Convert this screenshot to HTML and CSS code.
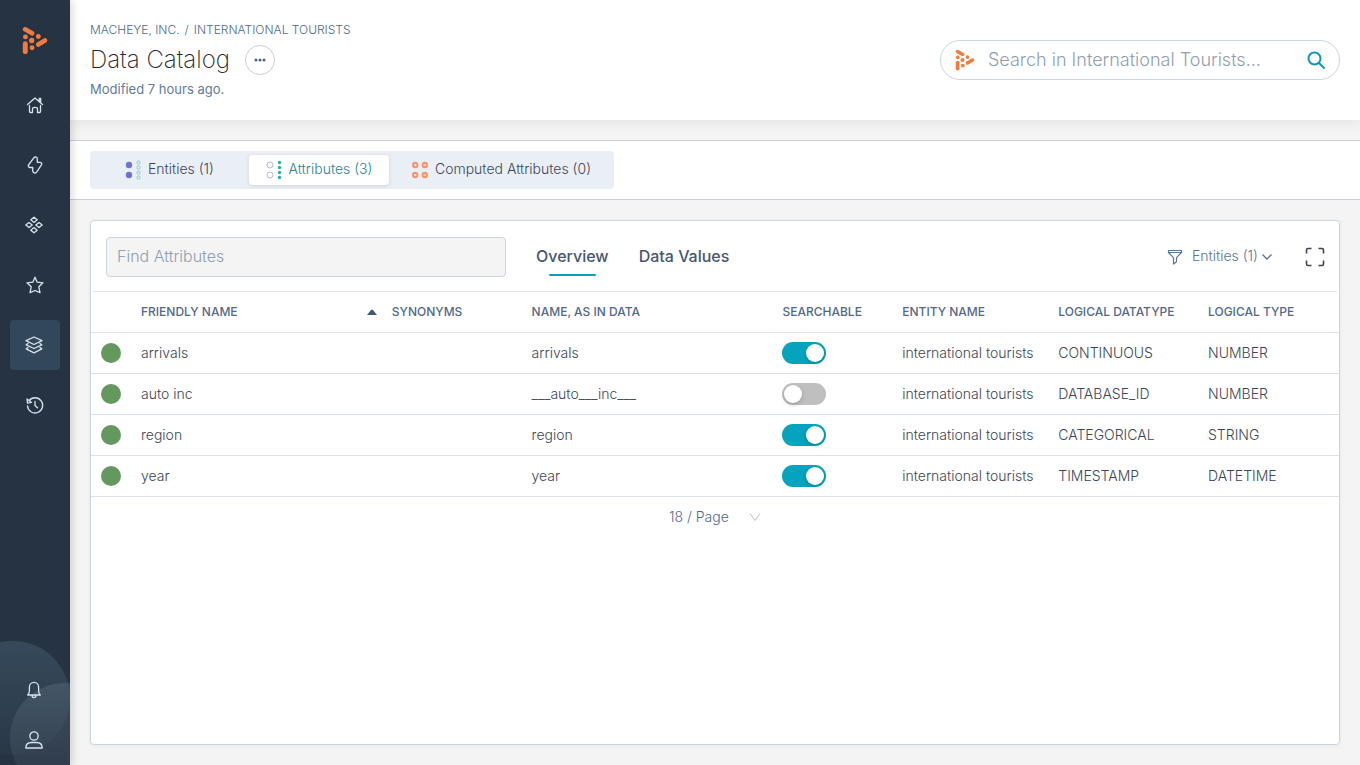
FILE: index.html
```html
<!DOCTYPE html>
<html lang="en">
<head>
<meta charset="utf-8">
<meta name="viewport" content="width=device-width, initial-scale=1">
<title>Data Catalog</title>
<link rel="stylesheet" href="styles.css">
</head>
<body>
<svg class="defs" aria-hidden="true">
  <symbol id="logo" viewBox="66 76 78 88">
    <g fill="none" stroke="currentColor" stroke-linecap="round">
      <path stroke-width="14" d="M75 86 96 98M115 132 135 120"/>
      <path stroke-width="15" d="M75.500 130V154"/>
    </g>
    <g fill="currentColor"><circle cx="76" cy="109" r="7.500"/><circle cx="95" cy="120" r="8"/><circle cx="115" cy="108" r="7.500"/><circle cx="96" cy="142" r="7.500"/></g>
  </symbol>
</svg>
<div class="app">
  <aside class="sidebar">
    <svg class="sidebar-art" viewBox="0 0 70 125" aria-hidden="true">
      <defs>
        <linearGradient id="fade" x1="0" y1="0" x2="0" y2="1"><stop offset="0" stop-color="#3c5365" stop-opacity=".7"/><stop offset="1" stop-color="#3c5365" stop-opacity=".15"/></linearGradient>
        <linearGradient id="fade2" x1="0" y1="0" x2="0" y2="1"><stop offset="0" stop-color="#5a6a7a" stop-opacity=".45"/><stop offset="1" stop-color="#5a6a7a" stop-opacity=".1"/></linearGradient>
      </defs>
      <circle cx="13" cy="58" r="57" fill="url(#fade)"/><circle cx="65" cy="98" r="55" fill="url(#fade2)"/>
    </svg>
    <a class="brand" href="#" aria-label="Home page"><svg width="26" height="29"><use href="#logo"/></svg></a>
    <nav class="nav" aria-label="Main">
      <a class="nav-item" href="#" aria-label="Home"><svg class="icon" viewBox="0 0 18 18"><path d="M1.500 8.500 9 2l7.500 6.500M13.300 5V2.500h1.400V7M3.500 9.500v6q0 1 1 1h2v-3.500q0-1.700 2.500-1.700t2.500 1.700v3.500h2q1 0 1-1v-6"/></svg></a>
      <a class="nav-item" href="#" aria-label="Insights"><svg class="icon" viewBox="0 0 18 18"><path d="M10.300 1.200Q11.300 1.500 11.300 2.600v3.700h2.900q2 .5 1.400 2.300l-4.800 7.200Q9.300 18 7.300 16.300q-.6-.7-.6-1.600V11.500H4Q1.700 11 2.500 9l5.100-6.900q1.100-1.500 2.700-.9Z"/></svg></a>
      <a class="nav-item" href="#" aria-label="Collections"><svg class="icon" viewBox="0 0 18 18"><path d="m8 1.200 3.200 2.600L8 6.400 4.800 3.800ZM3 6.400 6.200 9 3 11.600-.2 9ZM13 6.400 16.200 9 13 11.600 9.800 9ZM8 11.600l3.200 2.600L8 16.800l-3.200-2.600Z"/></svg></a>
      <a class="nav-item" href="#" aria-label="Favorites"><svg class="icon" viewBox="0 0 18 18"><path d="M9 1.200 11.200 6.200 17 6.800 12.800 10.800 14 16.700 9 14.500 4 16.700 5.200 10.800 1 6.800 6.800 6.200Z"/></svg></a>
      <a class="nav-item active" href="#" aria-label="Data catalog" aria-current="page"><svg class="icon" viewBox="0 0 18 18"><path d="m8 1 8 3.700-8 3.800-8-3.800ZM2 7.500.2 8.800 8 12.500l7.800-3.700L14 7.500M2 11.600.2 12.900 8 16.800l7.800-3.900-1.800-1.300"/></svg></a>
      <a class="nav-item" href="#" aria-label="History"><svg class="icon" viewBox="0 0 18 18"><path d="M3 4.800A7.600 7.600 0 1 1 1.500 9.800M1 3l.5 4.200 4-.8ZM9 5.500v4l2.500 2.300"/></svg></a>
    </nav>
    <nav class="nav-bottom" aria-label="Account">
      <a class="nav-item" href="#" aria-label="Notifications"><svg class="icon" viewBox="0 0 18 18"><path d="M1.700 14q1.700-1.500 1.700-4.500V6a4.600 4.600 0 0 1 9.200 0v3.500q0 3 1.700 4.500ZM6 14.300q0 2.400 2 2.400t2-2.400"/></svg></a>
      <a class="nav-item" href="#" aria-label="Profile"><svg class="icon" viewBox="0 0 18 18"><circle cx="8" cy="5" r="4.200"/><path d="M-.2 17q0-5.500 5.700-5.500h5q5.700 0 5.700 5.500Z"/></svg></a>
    </nav>
  </aside>
  <div class="content">
    <header class="header">
      <div>
        <nav class="crumbs" aria-label="Breadcrumb"><a href="#">MACHEYE, INC.</a><span>/</span><a href="#">INTERNATIONAL TOURISTS</a></nav>
        <div class="title-row">
          <h1>Data Catalog</h1>
          <button class="more" type="button" aria-label="More options"><svg width="12" height="4" viewBox="0 0 12 4" fill="currentColor"><circle cx="2" cy="2" r="1.500"/><circle cx="6" cy="2" r="1.500"/><circle cx="10" cy="2" r="1.500"/></svg></button>
        </div>
        <p class="modified">Modified 7 hours ago.</p>
      </div>
      <form class="search" role="search">
        <svg class="search-logo" width="20" height="22"><use href="#logo"/></svg>
        <input type="search" aria-label="Search in International Tourists" placeholder="Search in International Tourists...">
        <button type="button" aria-label="Search"><svg width="18" height="18" viewBox="0 0 18 18" fill="none" stroke="currentColor" stroke-width="2" stroke-linecap="round"><circle cx="7.500" cy="7.500" r="6"/><path d="m12 12 5 5"/></svg></button>
      </form>
    </header>
    <div class="tab-bar">
      <div class="tabs" role="tablist">
        <button class="tab" type="button" role="tab"><svg width="16" height="20" viewBox="0 0 16 20"><g fill="#6c74d0"><circle cx="4" cy="5" r="3.200"/><circle cx="4" cy="15" r="3.200"/></g><g fill="none" stroke="#7fd0c5"><circle cx="13.500" cy="2.500" r="1.600"/><circle cx="13.500" cy="7.500" r="1.600"/><circle cx="13.500" cy="12.500" r="1.600"/><circle cx="13.500" cy="17.500" r="1.600"/></g></svg><span>Entities (1)</span></button>
        <button class="tab selected" type="button" role="tab" aria-selected="true"><svg width="16" height="20" viewBox="0 0 16 20"><g fill="none" stroke="#b5b9e6"><circle cx="4" cy="5" r="3"/><circle cx="4" cy="15" r="3"/></g><g fill="#26b39c"><circle cx="13.500" cy="2.500" r="1.700"/><circle cx="13.500" cy="7.500" r="1.700"/><circle cx="13.500" cy="12.500" r="1.700"/><circle cx="13.500" cy="17.500" r="1.700"/></g></svg><span>Attributes (3)</span></button>
        <button class="tab" type="button" role="tab"><svg width="16" height="20" viewBox="0 0 16 20"><g fill="#f7936a"><circle cx="3.200" cy="5" r="3.200"/><circle cx="12.800" cy="5" r="3.200"/><circle cx="3.200" cy="15" r="3.200"/><circle cx="12.800" cy="15" r="3.200"/></g><path stroke="#fff" d="M2 5h2.400M3.200 3.800v2.400M11.500 5h2.600M2.200 14l2 2M4.200 14l-2 2M11.500 15h2.600"/></svg><span>Computed Attributes (0)</span></button>
      </div>
    </div>
    <main class="panel">
      <div class="toolbar">
        <input class="find" type="text" aria-label="Find attributes" placeholder="Find Attributes">
        <div class="views" role="tablist">
          <button class="view current" type="button" role="tab" aria-selected="true">Overview</button>
          <button class="view" type="button" role="tab">Data Values</button>
        </div>
        <button class="filter" type="button"><svg width="16" height="16" viewBox="0 0 16 16" fill="none" stroke="currentColor" stroke-width="1.200" stroke-linejoin="round"><path d="M1.500 1.500h13v2l-5 5.200v4L6.500 15V8.700l-5-5.200ZM1.500 3.500h13"/></svg><span>Entities (1)</span><svg width="10" height="8" viewBox="0 0 10 8" fill="none" stroke="currentColor" stroke-width="1.400"><path d="m.5 1.500 4.500 4.500 4.500-4.500"/></svg></button>
        <button class="expand" type="button" aria-label="Full screen"><svg width="20" height="20" viewBox="0 0 20 20" fill="none" stroke="currentColor" stroke-width="1.600"><path d="M1.500 6.500V3q0-1.500 1.500-1.500h3.500M13.500 1.500H17q1.500 0 1.500 1.500v3.500M18.500 13.500V17q0 1.500-1.500 1.500h-3.500M6.500 18.500H3q-1.500 0-1.500-1.500v-3.500"/></svg></button>
      </div>
      <table class="grid">
        <colgroup><col class="c-dot"><col class="c-name"><col class="c-syn"><col class="c-name"><col class="c-search"><col class="c-entity"><col class="c-data"><col class="c-type"></colgroup>
        <thead><tr><th aria-label="Status"></th><th aria-sort="ascending"><span class="sorted">FRIENDLY NAME<svg width="10" height="6" viewBox="0 0 10 6" fill="currentColor"><path d="M0 6 4 1q1-1 2 0l4 5Z"/></svg></span></th><th>SYNONYMS</th><th>NAME, AS IN DATA</th><th>SEARCHABLE</th><th>ENTITY NAME</th><th>LOGICAL DATATYPE</th><th>LOGICAL TYPE</th></tr></thead>
        <tbody>
          <tr><td><span class="dot"></span></td><td>arrivals</td><td></td><td>arrivals</td><td><input class="switch" type="checkbox" role="switch" aria-label="arrivals searchable" checked></td><td>international tourists</td><td>CONTINUOUS</td><td>NUMBER</td></tr>
          <tr><td><span class="dot"></span></td><td>auto inc</td><td></td><td>___auto___inc___</td><td><input class="switch" type="checkbox" role="switch" aria-label="auto inc searchable"></td><td>international tourists</td><td>DATABASE_ID</td><td>NUMBER</td></tr>
          <tr><td><span class="dot"></span></td><td>region</td><td></td><td>region</td><td><input class="switch" type="checkbox" role="switch" aria-label="region searchable" checked></td><td>international tourists</td><td>CATEGORICAL</td><td>STRING</td></tr>
          <tr><td><span class="dot"></span></td><td>year</td><td></td><td>year</td><td><input class="switch" type="checkbox" role="switch" aria-label="year searchable" checked></td><td>international tourists</td><td>TIMESTAMP</td><td>DATETIME</td></tr>
        </tbody>
      </table>
      <div class="pager">
        <select aria-label="Rows per page"><option>18 / Page</option></select>
        <svg width="12" height="10" viewBox="0 0 12 10" fill="none" stroke="#bcc3cb"><path d="m1 1.500 5 7 5-7"/></svg>
      </div>
    </main>
  </div>
</div>
</body>
</html>
```
FILE: styles.css
```css
* { box-sizing: border-box; }
body { margin: 0; font-family: Inter, "Noto Sans", sans-serif; font-size: 14px; font-weight: 300; line-height: 20px; color: #3c4658; background: #f4f4f4; }
a { color: inherit; text-decoration: none; }
button, input, select { font: inherit; color: inherit; margin: 0; }
button { padding: 0; border: 0; background: none; cursor: pointer; }
svg { display: block; flex: none; overflow: visible; }
.defs { position: absolute; width: 0; height: 0; }
.app { display: flex; min-height: 100vh; }

.sidebar { position: relative; z-index: 1; flex: none; width: 70px; display: flex; flex-direction: column; align-items: center; background: #263342; box-shadow: 2px 0 8px rgba(0, 0, 0, .16); }
.sidebar-art { position: absolute; left: 0; bottom: 0; width: 70px; overflow: hidden; }
.brand { display: flex; align-items: center; height: 80px; color: #f47b3c; }
.nav { display: grid; gap: 10px; }
.nav-bottom { position: relative; display: grid; margin-top: auto; }
.nav-item { display: grid; place-items: center; width: 50px; height: 50px; border-radius: 4px; color: #d8e3ee; }
.nav-item.active { background: #33475b; }
.icon { width: 18px; height: 18px; fill: none; stroke: currentColor; stroke-width: 1.3; stroke-linejoin: round; stroke-linecap: round; }

.content { flex: 1; min-width: 0; display: flex; flex-direction: column; }
.header { display: flex; align-items: center; justify-content: space-between; height: 120px; padding: 0 20px; background: #fff; box-shadow: 0 2px 14px rgba(0, 0, 0, .08); }
.crumbs { display: flex; gap: 5px; font-size: 12px; font-weight: 300; color: #4d6a8c; }
.title-row { display: flex; align-items: center; gap: 15px; height: 40px; }
h1 { margin: 0; font-size: 24px; font-weight: 200; line-height: 32px; color: #23272d; }
.more { display: grid; place-items: center; width: 30px; height: 30px; border: 1px solid #c5ced8; border-radius: 50%; color: #48658a; }
.modified { margin: 0; font-size: 13px; line-height: 18px; padding-bottom: 2px; font-weight: 400; color: #627c9b; }
.search { display: flex; align-items: center; width: 400px; height: 40px; padding: 0 14px; border: 1px solid #cbd5df; border-radius: 20px; }
.search-logo { color: #f47b3c; }
.search input { flex: 1; min-width: 0; height: 32px; margin-left: 13px; padding: 0 0 2px; border: 0; outline: 0; background: none; font-size: 18px; }
.search button { color: #0d98b4; }
::placeholder { color: #8f9fb1; opacity: 1; }

.tab-bar { margin-top: 20px; padding: 10px 20px; border: solid #cbd1d9; border-width: 1px 0; background: #fff; }
.tabs { display: inline-grid; grid-template-columns: 151px 140px 217px; gap: 4px; padding: 4px; border-radius: 4px; background: #eaeff6; vertical-align: top; }
.tab { display: flex; align-items: center; justify-content: center; gap: 7px; height: 30px; border-radius: 4px; white-space: nowrap; }
.tab span { padding-bottom: 2px; }
.tab.selected { background: #fff; color: #2a839b; box-shadow: 0 1px 4px rgba(0, 0, 0, .12); }

.panel { flex: 1; margin: 20px; border: 1px solid #cbd5e0; border-radius: 4px; background: #fff; box-shadow: 0 1px 4px rgba(0, 0, 0, .06); }
.toolbar { display: flex; align-items: center; margin: 0 2px; padding: 16px 12px 14px 13px; border-bottom: 1px solid #dfe3e8; }
.find { width: 400px; height: 40px; padding: 0 10px 2px; border: 1px solid #cbd5e0; border-radius: 4px; outline: 0; background: #f4f4f4; font-size: 16px; }
.views { display: flex; gap: 30px; margin-left: 30px; }
.view { display: grid; align-content: space-between; justify-items: center; height: 38px; padding-top: 8px; font-size: 16px; font-weight: 500; color: #46586f; }
.view.current::after { content: ""; width: 47px; height: 2px; border-radius: 1px; background: #0d9db6; }
.filter { display: flex; align-items: center; gap: 9px; margin-left: auto; color: #5b7594; }
.filter span { margin-right: -5px; padding-bottom: 2px; }
.expand { margin-left: 33px; color: #3f4650; }

.grid { width: 100%; table-layout: fixed; border-collapse: separate; border-spacing: 0; }
.grid th, .grid td { height: 41px; padding: 0 10px; border-bottom: 1px solid #dbe1e8; text-align: left; white-space: nowrap; }
.grid td { padding-bottom: 1px; }
.grid th { font-size: 12px; font-weight: 500; color: #52698a; }
.c-dot { width: 40px; }
.c-name { width: 20.1%; }
.c-syn { width: 11.2%; }
.c-search { width: 9.6%; }
.c-entity { width: 12.5%; }
.c-data { width: 12%; }
.sorted { display: flex; align-items: center; justify-content: space-between; }
.sorted svg { margin-right: -5px; color: #40597b; }
.dot { display: block; width: 20px; height: 20px; border-radius: 50%; background: #64985f; }
.switch { appearance: none; display: block; width: 44px; height: 22px; padding: 2px; border-radius: 11px; background: #bfbfbf; }
.switch::before { content: ""; display: block; width: 18px; height: 18px; border-radius: 50%; background: #fff; box-shadow: 0 2px 4px rgba(0, 35, 11, .2); }
.switch:checked { background: #05a3bd; }
.switch:checked::before { margin-left: auto; }
.pager { display: flex; align-items: center; justify-content: center; gap: 20px; height: 40px; color: #52698a; }
.pager select { appearance: none; padding: 0; border: 0; background: none; }
```
